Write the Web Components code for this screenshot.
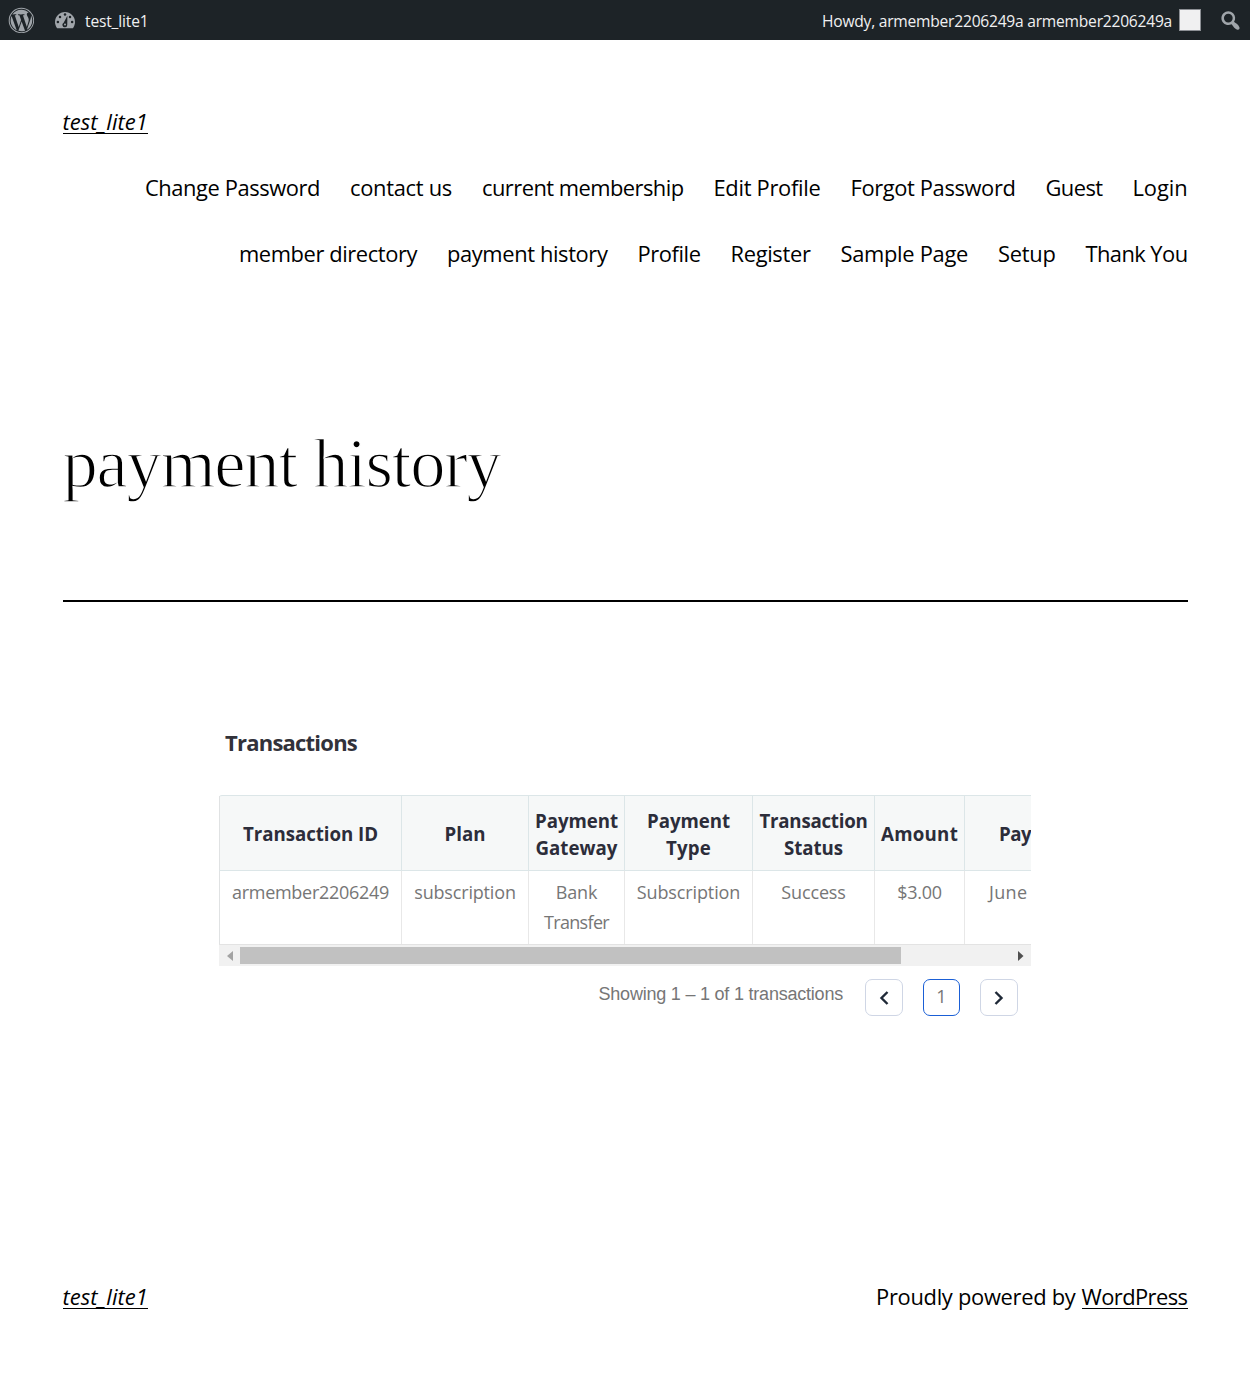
<!DOCTYPE html>
<html lang="en">
<head>
<meta charset="utf-8">
<title>payment history</title>
<style>
body{margin:0;background:#fff;color:#000;font-family:"Open Sans","Noto Sans",sans-serif}
</style>
</head>
<body>
<wp-page></wp-page>
<script>
/* Text set to a given advance width by letter spacing. */
class FitText extends HTMLElement{
  connectedCallback(){
    if(!this.shadowRoot){
      this.attachShadow({mode:'open'}).innerHTML='<style>:host{display:block;white-space:nowrap;flex:none}span{display:inline-block}</style><span><slot></slot></span>';
    }
    const w=parseFloat(this.getAttribute('w'));
    const s=this.shadowRoot.querySelector('span');
    this.style.width=w+'px';
    const n=this.textContent.length;
    const ls=(w-s.getBoundingClientRect().width)/n;
    s.style.letterSpacing=ls+'px';
  }
}
const define=(name,html)=>customElements.define(name,class extends HTMLElement{
  constructor(){super();this.attachShadow({mode:'open'}).innerHTML=html;}
});

define('admin-bar',`<style>
:host{display:flex;height:40px;background:#1d2327;color:#f0f0f1;font-size:15.6px;line-height:40px;box-sizing:border-box;padding:0 7.5px 0 8px}
svg{display:block;flex:none;fill:#a0a5aa}
.wp{margin:7px 19px 0 0}.dash{margin:6.5px 7px 0 0}.search{margin:7.8px 0 0 16.5px}
.grow{flex:1}.avatar{width:20px;height:20px;margin:9px 0 0 7px;background:#f0f0f1;border:1px solid #8c8f94}
fit-text{margin-top:1px}
</style>
<svg class="wp" width="26" height="26" viewBox="0 0 24 24"><g transform="translate(.4 .4)"><circle cx="12" cy="12" r="11.3" fill="none" stroke="#a0a5aa" stroke-width=".95"/><path transform="translate(.9 .9) scale(.925)" d="M21.469 6.825c.84 1.537 1.318 3.3 1.318 5.175 0 3.979-2.156 7.456-5.363 9.325l3.295-9.527c.615-1.54.82-2.771.82-3.864 0-.405-.026-.78-.07-1.11m-7.981.105c.647-.03 1.232-.105 1.232-.105.582-.075.514-.93-.067-.899 0 0-1.755.135-2.88.135-1.064 0-2.85-.15-2.85-.15-.585-.03-.661.855-.075.885 0 0 .54.061 1.125.09l1.68 4.605-2.37 7.08L5.354 6.9c.649-.03 1.234-.1 1.234-.1.585-.075.516-.93-.065-.896 0 0-1.746.138-2.874.138-.2 0-.438-.008-.69-.015C4.911 3.15 8.235 1.215 12 1.215c2.809 0 5.365 1.072 7.286 2.833-.046-.003-.091-.009-.141-.009-1.06 0-1.812.923-1.812 1.914 0 .89.513 1.643 1.06 2.531.411.72.89 1.643.89 2.977 0 .915-.354 1.994-.821 3.479l-1.075 3.585-3.9-11.61zM12 22.784c-1.059 0-2.081-.153-3.048-.437l3.237-9.406 3.315 9.087c.024.053.05.101.078.149-1.12.393-2.325.607-3.582.607M1.211 12c0-1.564.336-3.05.935-4.39L7.29 21.709C3.694 19.96 1.212 16.271 1.211 12"/></g></svg>
<svg class="dash" width="25" height="25" viewBox="0 0 20 20"><g transform="translate(-.4 0)"><path d="M3.76 17h12.48c1.1-1.37 1.76-3.11 1.76-5 0-4.42-3.58-8-8-8s-8 3.58-8 8c0 1.89.66 3.63 1.76 5z"/><g fill="#1d2327"><circle cx="10" cy="6" r="1"/><circle cx="6" cy="8" r="1"/><circle cx="14" cy="8" r="1"/><circle cx="4.3" cy="12" r="1"/><circle cx="15.7" cy="12" r="1"/><path d="M11.9 6.9l-.1 7.2a1.95 1.95 0 1 1-2.9-1.5z"/></g><circle cx="10" cy="14" r=".8"/></g></svg>
<fit-text w="63.5">test_lite1</fit-text>
<span class="grow"></span>
<fit-text w="350">Howdy, armember2206249a armember2206249a</fit-text>
<span class="avatar"></span>
<svg class="search" width="25" height="25" viewBox="0 0 20 20"><path d="M12.14 4.18c1.87 1.87 2.11 4.75.72 6.89.12.1.22.21.36.31.2.16.47.36.81.59.34.24.56.39.66.47.42.31.73.57.94.78.32.32.6.65.84 1 .25.35.44.69.59 1.04.14.35.21.68.18 1-.02.32-.14.59-.36.81s-.49.34-.81.36c-.31.02-.65-.04-.99-.19-.35-.14-.7-.34-1.04-.59-.35-.24-.68-.52-1-.84-.21-.21-.47-.52-.77-.93-.1-.13-.25-.35-.47-.66-.22-.32-.4-.57-.56-.78-.16-.2-.29-.35-.44-.5-2.07 1.09-4.69.76-6.44-.98-2.14-2.15-2.14-5.64 0-7.78 2.15-2.15 5.63-2.15 7.78 0zm-1.41 6.36c1.36-1.37 1.36-3.58 0-4.95-1.37-1.37-3.59-1.37-4.95 0-1.37 1.37-1.37 3.58 0 4.95 1.36 1.37 3.58 1.37 4.95 0z"/></svg>`);

define('site-title',`<style>:host{display:block;height:36px;line-height:32px;font-size:22px;font-style:italic}
fit-text{box-sizing:border-box;height:29px;border-bottom:1px solid #000}</style><fit-text w="85.5">test_lite1</fit-text>`);

define('site-nav',`<style>:host{display:flex;flex-direction:column;gap:30px;font-size:21.9px;line-height:36px}
div{display:flex;justify-content:flex-end;gap:30px}</style>
<div><fit-text w="175">Change Password</fit-text><fit-text w="102">contact us</fit-text><fit-text w="201.5">current membership</fit-text><fit-text w="107">Edit Profile</fit-text><fit-text w="165">Forgot Password</fit-text><fit-text w="57">Guest</fit-text><fit-text w="55">Login</fit-text></div>
<div><fit-text w="178">member directory</fit-text><fit-text w="160.5">payment history</fit-text><fit-text w="63">Profile</fit-text><fit-text w="80">Register</fit-text><fit-text w="127.5">Sample Page</fit-text><fit-text w="57.5">Setup</fit-text><fit-text w="102">Thank You</fit-text></div>`);

define('transactions-table',`<style>
:host{display:block;overflow:hidden;width:812px}
.row{display:grid;grid-template-columns:182px 127px 96px 128px 122px 90px 67px;box-sizing:border-box}
.row>div{display:flex;flex-direction:column;align-items:center;border-left:1px solid #e8e8e8}
.row>div:first-child{border-color:#e0e2e3}
.head{height:76px;background:#f6f8f8;border:solid #dce6e8;border-width:1px 0;font-weight:700;font-size:18.7px;line-height:27px;color:#2c2d3a;border-top-left-radius:3px}
.head>div{justify-content:center;border-color:#dce6e8;padding-top:1.5px}
.body{height:73px;font-size:18px;line-height:30px;color:#767676}
.body>div{padding-top:6px}
.row>div.cut{align-items:flex-start}
.head .cut{padding-left:34px}.body .cut{padding-left:24px}
.bar{display:flex;align-items:center;height:22px;background:#f1f1f1;border-top:1px solid #e3e3e3;box-sizing:border-box;padding:0 7px 0 8px}
.bar i{flex:none;width:661px;height:17px;background:#c1c1c1;margin:0 117px 0 7px}
svg{display:block;flex:none}
</style>
<div class="row head"><div><fit-text w="135">Transaction ID</fit-text></div><div><fit-text w="41">Plan</fit-text></div><div><fit-text w="83">Payment</fit-text><fit-text w="82">Gateway</fit-text></div><div><fit-text w="83">Payment</fit-text><fit-text w="45">Type</fit-text></div><div><fit-text w="108">Transaction</fit-text><fit-text w="59">Status</fit-text></div><div><fit-text w="77">Amount</fit-text></div><div class="cut"><fit-text w="32">Pay</fit-text></div></div>
<div class="row body"><div><fit-text w="157">armember2206249</fit-text></div><div><fit-text w="101.5">subscription</fit-text></div><div><fit-text w="41.5">Bank</fit-text><fit-text w="65">Transfer</fit-text></div><div><fit-text w="103.5">Subscription</fit-text></div><div><fit-text w="64.5">Success</fit-text></div><div><fit-text w="44.5">$3.00</fit-text></div><div class="cut"><fit-text w="38.5">June</fit-text></div></div>
<div class="bar"><svg width="6" height="10"><path d="M6 0v10L0 5z" fill="#a3a3a3"/></svg><i></i><svg width="6" height="10"><path d="M0 0v10l5.500-5z" fill="#505050"/></svg></div>`);

define('page-controls',`<style>
:host{display:flex;justify-content:flex-end;padding:13px 13px 0 0;color:#767676}
.info{font:18px/30px "Liberation Sans",Arial,sans-serif;margin-right:22px}
.b{display:flex;align-items:center;justify-content:center;box-sizing:border-box;width:38px;height:37px;border:1px solid #cfd6e5;border-radius:7px}
.on{width:37px;border-color:#1a5fd6;margin:0 20px;font-size:18px;line-height:32px;align-items:flex-start}
svg{fill:none;stroke:#1f2937;stroke-width:2.4}
</style>
<fit-text class="info" w="244.500">Showing 1 – 1 of 1 transactions</fit-text>
<div class="b"><svg width="10" height="14"><path d="M8.500 1L2.500 7l6 6"/></svg></div><div class="b on">1</div><div class="b"><svg width="10" height="14"><path d="M1.500 1l6 6-6 6"/></svg></div>`);

define('site-footer',`<style>:host{display:flex;justify-content:space-between;font-size:21.9px;line-height:33px}
div{display:flex;gap:6px}.u{box-sizing:border-box;height:29px;border-bottom:1px solid #000}</style>
<site-title></site-title><div><fit-text w="199.500">Proudly powered by</fit-text><fit-text class="u" w="106">WordPress</fit-text></div>`);

define('wp-page',`<style>
:host{display:block;height:1394px;overflow:hidden}
main{padding:0 62.5px}
header{display:block;padding-top:65px}
site-nav{margin-top:29px}
h1{margin:151px 0 0;height:80px;font:400 70.5px/80px "Liberation Serif",serif;-webkit-text-stroke:1.5px #fff}
.rule{height:2px;background:#000;margin-top:97px}
section{width:812px;margin:121px auto 0}
h2{margin:0 0 33px 6px;font-size:22px;line-height:38px;font-weight:700;color:#32323a}
h2 fit-text{height:39px}
site-footer{margin-top:264px}
</style>
<admin-bar></admin-bar>
<main><header><site-title></site-title><site-nav></site-nav></header>
<h1><fit-text w="438">payment history</fit-text></h1><div class="rule"></div>
<section><h2><fit-text w="132">Transactions</fit-text></h2><transactions-table></transactions-table><page-controls></page-controls></section>
<site-footer></site-footer></main>`);
customElements.define('fit-text',FitText);
</script>
</body>
</html>
